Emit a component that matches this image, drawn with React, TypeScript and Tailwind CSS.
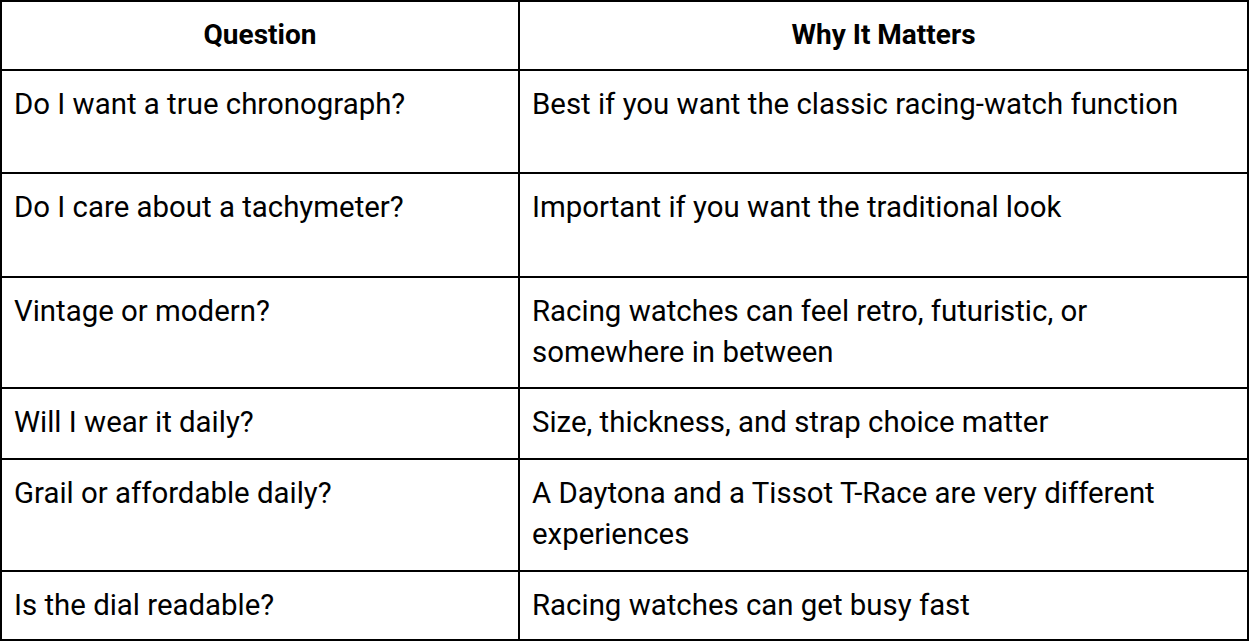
const rows: Array<[string, string]> = [
    ['Do I want a true chronograph?', 'Best if you want the classic racing-watch function'],
    ['Do I care about a tachymeter?', 'Important if you want the traditional look'],
    ['Vintage or modern?', 'Racing watches can feel retro, futuristic, or somewhere in between'],
    ['Will I wear it daily?', 'Size, thickness, and strap choice matter'],
    ['Grail or affordable daily?', 'A Daytona and a Tissot T-Race are very different experiences'],
    ['Is the dial readable?', 'Racing watches can get busy fast'],
];

export default function App() {
    return (
        <div className="min-h-[642px] bg-white font-['Roboto',sans-serif] text-[29.4px] leading-[41px] text-black">
            <div className="grid w-[1249px] grid-cols-[518px_729px] grid-rows-[69px_103px_104px_111px_71px_112px_69px] border-t-2 border-l-2 border-black">
                <div className="flex items-center justify-center border-r-2 border-b-2 border-black pb-[3px] text-[28px] font-bold">
                    Question
                </div>
                <div className="flex items-center justify-center border-r-2 border-b-2 border-black pb-[3px] text-[28px] font-bold">
                    Why It Matters
                </div>
                {rows.map(([question, why]) => (
                    <>
                        <div key={question} className="border-r-2 border-b-2 border-black px-3 pt-[13px]">
                            {question}
                        </div>
                        <div key={why} className="border-r-2 border-b-2 border-black px-3 pt-[13px]">
                            {why}
                        </div>
                    </>
                ))}
            </div>
        </div>
    );
}
